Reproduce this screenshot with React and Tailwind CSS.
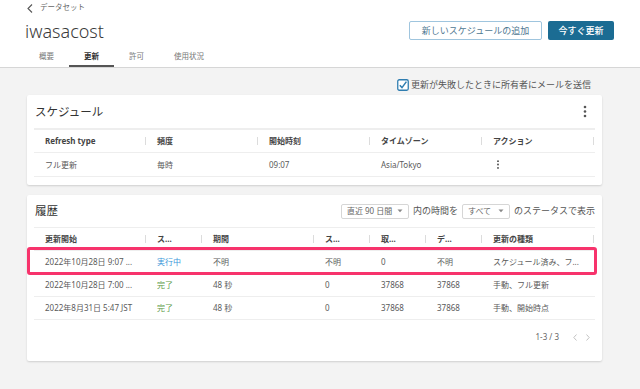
import React from "react";

const font = "font-['Noto_Sans','Noto_Sans_CJK_JP',sans-serif]";

function Kebab({ className = "" }) {
  return (
    <svg width="4" height="13" viewBox="0 0 4 13" className={className}>
      <circle cx="2" cy="2" r="1.3" fill="#555" />
      <circle cx="2" cy="6.5" r="1.3" fill="#555" />
      <circle cx="2" cy="11" r="1.3" fill="#555" />
    </svg>
  );
}

function HeadCell({ children, w }) {
  return (
    <div className={`flex items-center justify-between pl-[11px] ${w}`}>
      <span className="text-[8px] font-bold text-[#444] whitespace-nowrap">{children}</span>
      <span className="w-px h-[8px] bg-[#dcdcdc]" />
    </div>
  );
}

function Cell({ children, w, color = "text-[#5a5a5a]" }) {
  return (
    <div className={`pl-[11px] text-[8px] whitespace-nowrap ${color} ${w}`}>{children}</div>
  );
}

function Select({ label, w }) {
  return (
    <div
      className={`h-[15px] border border-[#d6d6d6] rounded-[2px] flex items-center justify-between pl-[5px] pr-[5px] text-[8px] text-[#666] ${w}`}
    >
      <span>{label}</span>
      <svg width="6" height="4" viewBox="0 0 6 4">
        <path d="M0.5 0.5 L3 3.2 L5.5 0.5 Z" fill="#888" />
      </svg>
    </div>
  );
}

const schedCols = ["w-[112px]", "w-[112px]", "w-[112px]", "w-[112px]", "w-[112px]"];
const histCols = ["w-[112px]", "w-[56px]", "w-[112px]", "w-[56px]", "w-[56px]", "w-[56px]", "w-[112px]"];

const history = [
  ["2022年10月28日 9:07 ...", "実行中", "不明", "不明", "0", "不明", "スケジュール済み、フ..."],
  ["2022年10月28日 7:00 ...", "完了", "48 秒", "0", "37868", "37868", "手動、フル更新"],
  ["2022年8月31日 5:47 JST", "完了", "48 秒", "0", "37868", "37868", "手動、開始時点"],
];

export default function App() {
  return (
    <div className={`w-[640px] h-[389px] overflow-hidden bg-[#f3f3f3] ${font}`}>
      <header className="h-[68px] bg-white border-b border-[#d6d6d6]">
        <div className="flex justify-between pl-[24px] pr-[26px]">
          <div>
            <div className="mt-[2px] h-[12px] pl-[3px] flex items-center gap-[7px] text-[7.5px] text-[#666]">
              <svg width="6" height="9" viewBox="0 0 6 9">
                <path d="M5 0.5 L1 4.5 L5 8.5" stroke="#555" strokeWidth="1.1" fill="none" />
              </svg>
              <span>データセット</span>
            </div>
            <h1 className="mt-[6px] pl-[1px] h-[22px] leading-[22px] text-[18px] font-light text-[#3a3a3a]">iwasacost</h1>
            <nav className="mt-[5px] flex h-[20px] text-[7.5px]">
              <div className="px-[15px] flex items-center text-[#777]">概要</div>
              <div className="px-[15px] flex items-center font-bold text-[#333] border-b-2 border-[#555] pt-[2px]">更新</div>
              <div className="px-[15px] flex items-center text-[#777]">許可</div>
              <div className="px-[15px] flex items-center text-[#777]">使用状況</div>
            </nav>
          </div>
          <div className="flex gap-[6px] pt-[21px]">
            <button className="h-[19px] w-[133px] border border-[#9fc5de] rounded-[2px] text-[9px] text-[#4f7791] bg-white">
              新しいスケジュールの追加
            </button>
            <button className="h-[19px] w-[66px] rounded-[2px] text-[9px] text-white bg-[#1b6c93] font-medium">
              今すぐ更新
            </button>
          </div>
        </div>
      </header>

      <div className="ml-[27px] w-[575px]">
        <div className="mt-[10px] h-[14px] flex items-center justify-end gap-[2px] pr-[11px]">
          <svg width="12" height="12" viewBox="0 0 12 12">
            <rect x="0.75" y="0.75" width="10.5" height="10.5" rx="1.5" fill="white" stroke="#2f7db0" strokeWidth="1.3" />
            <path d="M2.8 6.2 L5 8.6 L9.4 2.6" stroke="#2f7db0" strokeWidth="1.5" fill="none" />
          </svg>
          <span className="text-[9px] text-[#555]">更新が失敗したときに所有者にメールを送信</span>
        </div>

        <section className="mt-[3px] bg-white rounded-[2px] shadow-[0_1px_2px_rgba(0,0,0,0.15)] px-[7px] pb-[8px]">
          <div className="h-[33px] flex items-center justify-between pl-[1px] pr-[8px]">
            <h2 className="text-[11.5px] text-[#333]">スケジュール</h2>
            <Kebab />
          </div>
          <div className="h-[25px] flex items-center border-t-2 border-b border-[#eeeeee]">
            {["Refresh type", "頻度", "開始時刻", "タイムゾーン", "アクション"].map((h, i) => (
              <HeadCell key={h} w={schedCols[i]}>{h}</HeadCell>
            ))}
          </div>
          <div className="h-[24px] flex items-center border-b border-[#eeeeee]">
            <Cell w={schedCols[0]}>フル更新</Cell>
            <Cell w={schedCols[1]}>毎時</Cell>
            <Cell w={schedCols[2]}>09:07</Cell>
            <Cell w={schedCols[3]}>Asia/Tokyo</Cell>
            <div className={`pl-[14px] flex items-center ${schedCols[4]}`}>
              <Kebab className="scale-75" />
            </div>
          </div>
        </section>

        <section className="relative mt-[10px] bg-white rounded-[2px] shadow-[0_1px_2px_rgba(0,0,0,0.15)] px-[7px] pb-[7px]">
          <div className="h-[32px] flex items-center justify-between pl-[1px]">
            <h2 className="text-[11.5px] text-[#333]">履歴</h2>
            <div className="flex items-center gap-[4px] text-[9px] text-[#555]">
              <Select label="直近 90 日間" w="w-[68px]" />
              <span>内の時間を</span>
              <Select label="すべて" w="w-[48px]" />
              <span>のステータスで表示</span>
            </div>
          </div>
          <div className="h-[24px] flex items-center border-t border-b border-[#eeeeee]">
            {["更新開始", "ス...", "期間", "ス...", "取...", "デ...", "更新の種類"].map((h, i) => (
              <HeadCell key={i} w={histCols[i]}>{h}</HeadCell>
            ))}
          </div>
          {history.map((row, r) => (
            <div key={r} className="h-[23px] flex items-center border-b border-[#eeeeee]">
              {row.map((c, i) => (
                <Cell
                  key={i}
                  w={histCols[i]}
                  color={
                    i === 1
                      ? c === "実行中"
                        ? "text-[#3b97d9]"
                        : "text-[#5e9b4a]"
                      : "text-[#5a5a5a]"
                  }
                >
                  {c}
                </Cell>
              ))}
            </div>
          ))}
          <div className="h-[34px] flex items-center justify-end gap-[14px] pr-[5px] text-[8px] text-[#666]">
            <span>1-3 / 3</span>
            <div className="flex items-center gap-[9px]">
              <svg width="4" height="7" viewBox="0 0 4 7">
                <path d="M3.5 0.5 L0.8 3.5 L3.5 6.5" stroke="#bbb" strokeWidth="0.9" fill="none" />
              </svg>
              <svg width="4" height="7" viewBox="0 0 4 7">
                <path d="M0.5 0.5 L3.2 3.5 L0.5 6.5" stroke="#bbb" strokeWidth="0.9" fill="none" />
              </svg>
            </div>
          </div>
          <div className="absolute left-0 top-[52px] w-[570px] h-[28px] border-[3px] border-[#f7336c] rounded-[3px]" />
        </section>
      </div>
    </div>
  );
}
